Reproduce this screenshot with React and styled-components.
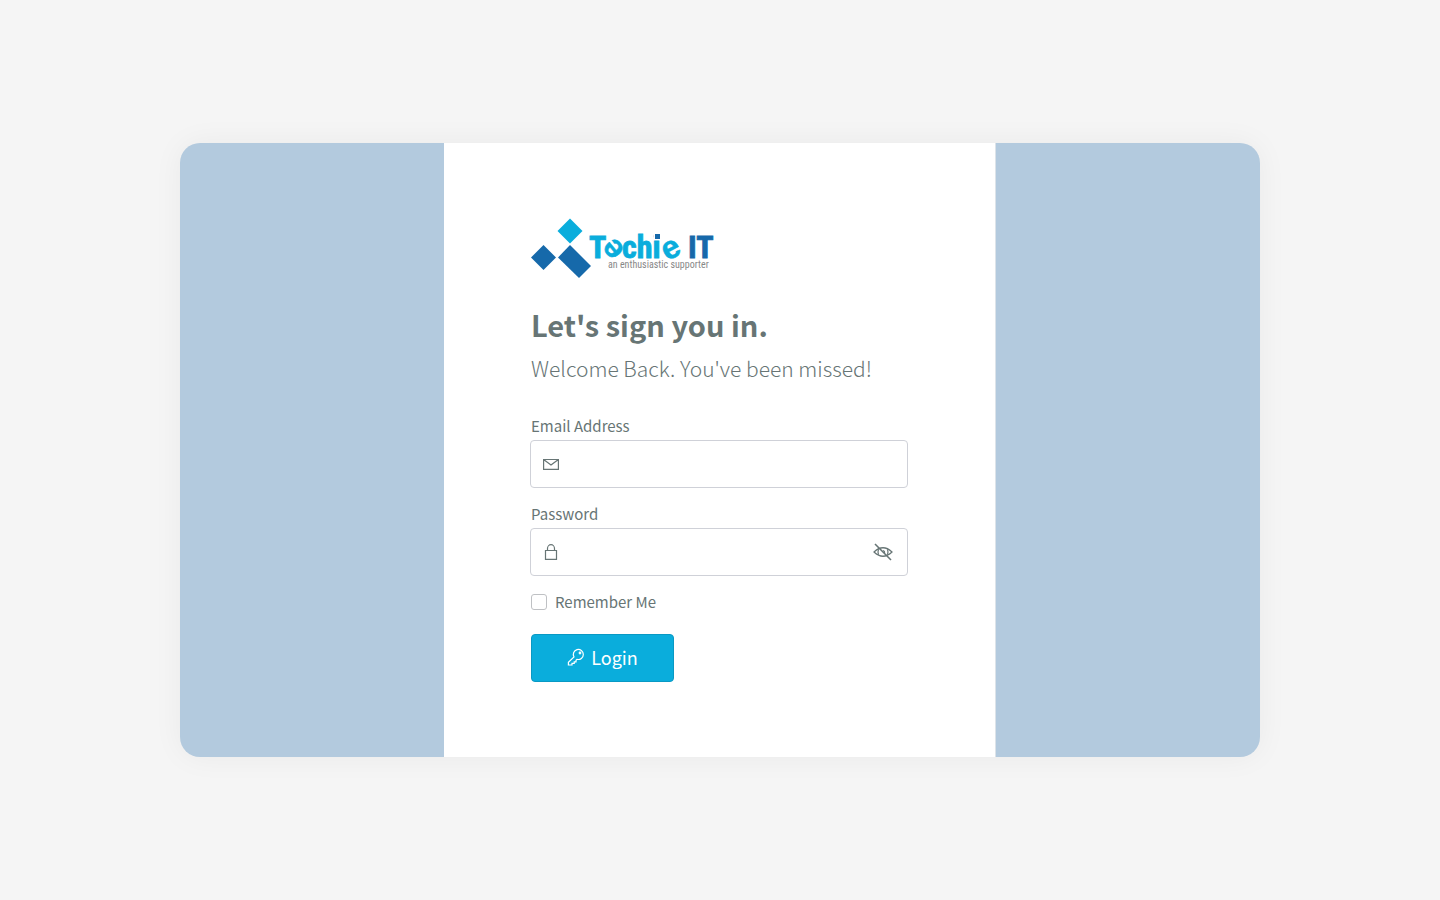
import React, { useState } from "react";
import styled, { createGlobalStyle } from "styled-components";

const Global = createGlobalStyle`
  *, *::before, *::after { box-sizing: border-box; }
  body {
    margin: 0;
    background: #f5f5f5;
    color: #677575;
    font-family: "Noto Sans CJK SC", "Noto Sans", sans-serif;
    font-size: 15px;
    line-height: 24px;
  }
`;

const Page = styled.main`
  min-height: 100vh;
  display: flex;
  align-items: center;
  justify-content: center;
`;

const Card = styled.div`
  width: 75%;
  min-width: 552px;
  display: flex;
  justify-content: center;
  background: #b3cade;
  border-radius: 20px;
  overflow: hidden;
  box-shadow: 0 0 30px rgba(0, 0, 0, 0.05);
`;

const Panel = styled.section`
  width: 552px;
  padding: 75px 87px;
  background: #fff;
  border-right: 1px solid #dce3e9;
`;

const Logo = styled.svg`
  display: block;
  width: 184px;
  height: 60px;
  overflow: visible;
`;

const Title = styled.h1`
  margin: 26px 0 0;
  font-size: 29px;
  line-height: 40px;
  font-weight: 700;
`;

const Subtitle = styled.p`
  margin: 8px 0 0;
  font-size: 21px;
  line-height: 32px;
  font-weight: 300;
`;

const Form = styled.form`
  margin-top: 30px;
`;

const Field = styled.div`
  margin-bottom: 14px;
`;

const Label = styled.label`
  display: block;
`;

const InputBox = styled.div`
  display: flex;
  align-items: center;
  height: 48px;
  margin: 2px 0 0 -1px;
  padding: 0 12px;
  border: 1px solid #cfd1d8;
  border-radius: 4px;
`;

const Input = styled.input`
  flex: 1;
  min-width: 0;
  height: 100%;
  padding: 0 12px;
  border: 0;
  outline: 0;
  background: transparent;
  color: inherit;
  font: inherit;
`;

const Icon = styled.svg`
  display: block;
  flex: none;
  width: ${(p) => p.$size}px;
  height: ${(p) => p.$size}px;
  fill: none;
  stroke: currentColor;
  stroke-width: 1.2;
`;

const RevealButton = styled.button`
  padding: 0;
  margin-right: 2px;
  border: 0;
  background: none;
  color: inherit;
  cursor: pointer;
`;

const Remember = styled.label`
  display: flex;
  align-items: center;
  gap: 8px;
`;

const Checkbox = styled.input`
  appearance: none;
  width: 16px;
  height: 16px;
  margin: 0;
  border: 1px solid #bfc1c4;
  border-radius: 3px;
  background: #fff;
  &:checked { background: #0aaddc; }
`;

const LoginButton = styled.button`
  display: flex;
  align-items: center;
  justify-content: center;
  gap: 6px;
  width: 143px;
  height: 48px;
  margin-top: 20px;
  padding: 0 0 2px;
  border: 1px solid #0999c4;
  border-radius: 4px;
  background: #0aaddc;
  color: #fff;
  font: inherit;
  font-size: 18px;
  cursor: pointer;
`;

const Wordmark = styled.text`
  font-family: "Liberation Sans Narrow", "Roboto Condensed", sans-serif;
  font-size: 32px;
  font-weight: 700;
  fill: ${(p) => p.$color};
  stroke: ${(p) => p.$color};
  stroke-width: 0.8;
`;

const Swirl = styled.text`
  font-family: "Liberation Sans", sans-serif;
  font-size: 32px;
  font-weight: 700;
  fill: #0aaddc;
  stroke: #0aaddc;
  stroke-width: 0.5;
`;

const Tagline = styled.text`
  font-family: "Liberation Sans Narrow", "Roboto Condensed", sans-serif;
  font-size: 10px;
  fill: #888;
`;

function TechieLogo() {
  return (
    <Logo viewBox="0 0 184 60" role="img" aria-label="Techie IT">
      <path d="M39 0.5 51.5 13 39 25.5 26.5 13Z" fill="#0aaddc" />
      <path d="M12.5 27 25 39.5 12.5 52 0 39.500Z" fill="#1669aa" />
      <path d="M39 27 60 48 48 60 27 39.5Z" fill="#1669aa" />
      <Wordmark x="58" y="40" $color="#0aaddc">T</Wordmark>
      <Swirl x="-9" y="9" transform="translate(82 31) rotate(-130)">e</Swirl>
      <Wordmark x="91" y="40" $color="#0aaddc">chi</Wordmark>
      <rect x="123" y="14" width="7" height="7" fill="#fff" />
      <rect x="124" y="16" width="5" height="5" fill="#1669aa" />
      <Swirl x="-9" y="9" transform="translate(140 31) rotate(-28)">e</Swirl>
      <Wordmark x="157" y="40" $color="#1669aa">IT</Wordmark>
      <Tagline x="77" y="50">an enthusiastic supporter</Tagline>
    </Logo>
  );
}

export default function App() {
  const [visible, setVisible] = useState(false);
  return (
    <>
      <Global />
      <Page>
        <Card>
          <Panel>
            <TechieLogo />
            <Title>Let's sign you in.</Title>
            <Subtitle>Welcome Back. You've been missed!</Subtitle>
            <Form onSubmit={(e) => e.preventDefault()}>
              <Field>
                <Label htmlFor="email">Email Address</Label>
                <InputBox>
                  <Icon $size={16} viewBox="0 0 16 16" aria-hidden="true">
                    <path d="M0.6 3.5H15.4V13.4H0.6ZM0.6 3.5 8 9 15.4 3.5" />
                  </Icon>
                  <Input id="email" type="email" />
                </InputBox>
              </Field>
              <Field>
                <Label htmlFor="password">Password</Label>
                <InputBox>
                  <Icon $size={16} viewBox="0 0 16 16" aria-hidden="true">
                    <path d="M2.5 6.5H13.5V15.4H2.5ZM4.5 6.5V4.5a3.5 3.8 0 0 1 7 0V6.5" />
                  </Icon>
                  <Input id="password" type={visible ? "text" : "password"} />
                  <RevealButton type="button" aria-label="Show password" onClick={() => setVisible(!visible)}>
                    <Icon $size={20} viewBox="0 0 20 20" aria-hidden="true">
                      <path d="M1 10Q10 1.5 19 10Q10 18.5 1 10Z" />
                      <path d="M5.5 7.2Q4.5 10 5.5 12.8M14.5 7.2Q15.5 10 14.5 12.8" />
                      <path d="M10 8.5A2 2 0 0 1 11.5 11" />
                      <path d="M2 2 18 18" strokeWidth="1.6" />
                    </Icon>
                  </RevealButton>
                </InputBox>
              </Field>
              <Remember>
                <Checkbox type="checkbox" />
                Remember Me
              </Remember>
              <LoginButton type="submit">
                <Icon $size={18} viewBox="0 0 18 18" aria-hidden="true">
                  <path d="M7 9A5 5 0 1 1 10 11.3L9 12.2V13.8H7.2V15.4H5V17H1.4V14.2L7 9Z" />
                  <circle cx="13" cy="5" r="0.8" />
                </Icon>
                Login
              </LoginButton>
            </Form>
          </Panel>
        </Card>
      </Page>
    </>
  );
}
